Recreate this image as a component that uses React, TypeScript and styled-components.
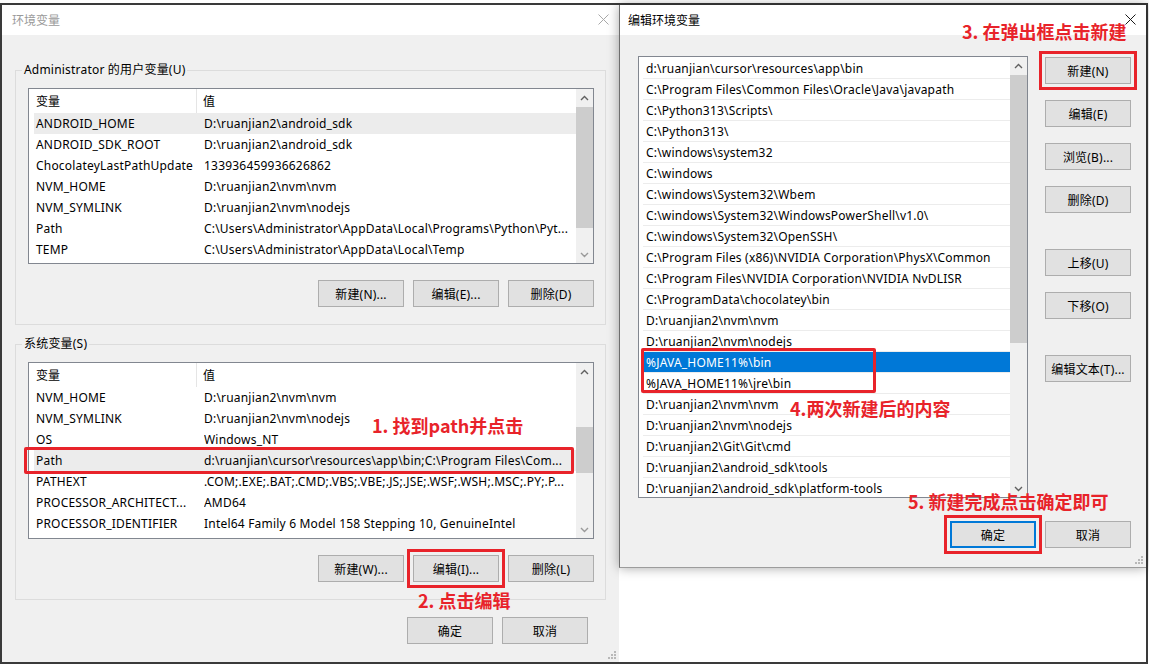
import React, { FC } from 'react';
import styled, { createGlobalStyle, css } from 'styled-components';

const GlobalStyle = createGlobalStyle`
    html, body {
        margin: 0;
        padding: 0;
        background: #fff;
    }
    body {
        font-family: "Noto Sans", "Noto Sans CJK SC", sans-serif;
        font-size: 12px;
        color: #000;
    }
    * {
        box-sizing: border-box;
    }
`;

type VarRow = { name: string; value: string; selected?: boolean };

const userVars: VarRow[] = [
    { name: 'ANDROID_HOME', value: 'D:\\ruanjian2\\android_sdk', selected: true },
    { name: 'ANDROID_SDK_ROOT', value: 'D:\\ruanjian2\\android_sdk' },
    { name: 'ChocolateyLastPathUpdate', value: '133936459936626862' },
    { name: 'NVM_HOME', value: 'D:\\ruanjian2\\nvm\\nvm' },
    { name: 'NVM_SYMLINK', value: 'D:\\ruanjian2\\nvm\\nodejs' },
    { name: 'Path', value: 'C:\\Users\\Administrator\\AppData\\Local\\Programs\\Python\\Pyt...' },
    { name: 'TEMP', value: 'C:\\Users\\Administrator\\AppData\\Local\\Temp' },
];

const systemVars: VarRow[] = [
    { name: 'NVM_HOME', value: 'D:\\ruanjian2\\nvm\\nvm' },
    { name: 'NVM_SYMLINK', value: 'D:\\ruanjian2\\nvm\\nodejs' },
    { name: 'OS', value: 'Windows_NT' },
    { name: 'Path', value: 'd:\\ruanjian\\cursor\\resources\\app\\bin;C:\\Program Files\\Com...', selected: true },
    { name: 'PATHEXT', value: '.COM;.EXE;.BAT;.CMD;.VBS;.VBE;.JS;.JSE;.WSF;.WSH;.MSC;.PY;.P...' },
    { name: 'PROCESSOR_ARCHITECT...', value: 'AMD64' },
    { name: 'PROCESSOR_IDENTIFIER', value: 'Intel64 Family 6 Model 158 Stepping 10, GenuineIntel' },
];

const pathEntries = [
    'd:\\ruanjian\\cursor\\resources\\app\\bin',
    'C:\\Program Files\\Common Files\\Oracle\\Java\\javapath',
    'C:\\Python313\\Scripts\\',
    'C:\\Python313\\',
    'C:\\windows\\system32',
    'C:\\windows',
    'C:\\windows\\System32\\Wbem',
    'C:\\windows\\System32\\WindowsPowerShell\\v1.0\\',
    'C:\\windows\\System32\\OpenSSH\\',
    'C:\\Program Files (x86)\\NVIDIA Corporation\\PhysX\\Common',
    'C:\\Program Files\\NVIDIA Corporation\\NVIDIA NvDLISR',
    'C:\\ProgramData\\chocolatey\\bin',
    'D:\\ruanjian2\\nvm\\nvm',
    'D:\\ruanjian2\\nvm\\nodejs',
    '%JAVA_HOME11%\\bin',
    '%JAVA_HOME11%\\jre\\bin',
    'D:\\ruanjian2\\nvm\\nvm',
    'D:\\ruanjian2\\nvm\\nodejs',
    'D:\\ruanjian2\\Git\\Git\\cmd',
    'D:\\ruanjian2\\android_sdk\\tools',
    'D:\\ruanjian2\\android_sdk\\platform-tools',
];

const CloseIcon: FC<{ color: string }> = ({ color }) => (
    <svg width="11" height="11" viewBox="0 0 11 11">
        <path d="M0.5 0.5 L10.5 10.5 M10.5 0.5 L0.5 10.5" stroke={color} strokeWidth="1" />
    </svg>
);

const Chevron: FC<{ up?: boolean; color?: string }> = ({ up, color = '#606060' }) => (
    <svg width="9" height="6" viewBox="0 0 9 6">
        <polyline
            points={up ? '1,5 4.5,1.5 8,5' : '1,1 4.5,4.5 8,1'}
            fill="none"
            stroke={color}
            strokeWidth="1.4"
        />
    </svg>
);

const GripIcon: FC = () => (
    <svg width="8" height="8" viewBox="0 0 8 8">
        {[
            [6, 0],
            [6, 3],
            [3, 3],
            [6, 6],
            [3, 6],
            [0, 6],
        ].map(([x, y]) => (
            <rect key={`${x}-${y}`} x={x} y={y} width="2" height="2" fill="#b8b8b8" />
        ))}
    </svg>
);

const ScrollBar: FC<{ thumbTop: number; thumbHeight: number; downColor?: string }> = ({
    thumbTop,
    thumbHeight,
    downColor,
}) => (
    <Track>
        <Arrow>
            <Chevron up />
        </Arrow>
        <Thumb $top={thumbTop} $height={thumbHeight} />
        <Arrow $bottom>
            <Chevron color={downColor} />
        </Arrow>
    </Track>
);

const VarTable: FC<{ rows: VarRow[]; height: number; thumbTop: number; thumbHeight: number }> = ({
    rows,
    height,
    thumbTop,
    thumbHeight,
}) => (
    <Table $height={height}>
        <TableContent>
            <HeaderRow>
                <HeaderCell>变量</HeaderCell>
                <HeaderCell $last>值</HeaderCell>
            </HeaderRow>
            <TableBody>
                {rows.map((row) => (
                    <VarLine key={row.name} $selected={row.selected}>
                        <NameCell>{row.name}</NameCell>
                        <ValueCell>{row.value}</ValueCell>
                    </VarLine>
                ))}
            </TableBody>
        </TableContent>
        <ScrollBar thumbTop={thumbTop} thumbHeight={thumbHeight} downColor="#9a9a9a" />
    </Table>
);

const App: FC = () => (
    <>
        <GlobalStyle />
        <Screen>
            <Frame>
                <EnvDialog>
                    <TitleBar>
                        <Title $inactive>环境变量</Title>
                        <CloseIcon color="#a8a8a8" />
                    </TitleBar>
                    <DialogBody>
                        <Group>
                            <GroupLabel>Administrator 的用户变量(U)</GroupLabel>
                            <VarTable rows={userVars} height={176} thumbTop={18} thumbHeight={121} />
                            <ButtonRow>
                                <Button>新建(N)...</Button>
                                <Button>编辑(E)...</Button>
                                <Button>删除(D)</Button>
                            </ButtonRow>
                        </Group>
                        <Group $spaced>
                            <GroupLabel>系统变量(S)</GroupLabel>
                            <VarTable rows={systemVars} height={177} thumbTop={64} thumbHeight={46} />
                            <ButtonRow>
                                <Button>新建(W)...</Button>
                                <Button $marked>编辑(I)...</Button>
                                <Button>删除(L)</Button>
                            </ButtonRow>
                        </Group>
                        <FooterRow $top={17} $inset={18}>
                            <Button>确定</Button>
                            <Button>取消</Button>
                        </FooterRow>
                    </DialogBody>
                    <Grip>
                        <GripIcon />
                    </Grip>
                </EnvDialog>

                <RightColumn>
                    <EditDialog>
                        <TitleBar>
                            <Title>编辑环境变量</Title>
                            <CloseIcon color="#1a1a1a" />
                        </TitleBar>
                        <EditBody>
                            <PathList>
                                <PathContent>
                                    {pathEntries.map((entry, i) => (
                                        <PathLine key={`${entry}-${i}`} $selected={i === 14}>
                                            {entry}
                                        </PathLine>
                                    ))}
                                </PathContent>
                                <ScrollBar thumbTop={18} thumbHeight={268} />
                            </PathList>
                            <SideButtons>
                                <Button $marked>新建(N)</Button>
                                <Button>编辑(E)</Button>
                                <Button>浏览(B)...</Button>
                                <Button>删除(D)</Button>
                                <Button $spaced>上移(U)</Button>
                                <Button>下移(O)</Button>
                                <Button $spaced>编辑文本(T)...</Button>
                            </SideButtons>
                        </EditBody>
                        <FooterRow $top={23} $inset={15}>
                            <Button $default $marked>
                                确定
                            </Button>
                            <Button>取消</Button>
                        </FooterRow>
                        <Grip>
                            <GripIcon />
                        </Grip>
                    </EditDialog>
                    <Desktop />
                </RightColumn>
            </Frame>

            <Marker style={{ left: 24, top: 447, width: 550, height: 27 }} />
            <Marker style={{ left: 641, top: 348, width: 235, height: 45 }} />
            <Note style={{ left: 372, top: 416 }}>1. 找到path并点击</Note>
            <Note style={{ left: 418, top: 591 }}>2. 点击编辑</Note>
            <Note style={{ left: 962, top: 22 }}>3. 在弹出框点击新建</Note>
            <Note style={{ left: 790, top: 399 }}>4.两次新建后的内容</Note>
            <Note style={{ left: 908, top: 492 }}>5. 新建完成点击确定即可</Note>
        </Screen>
    </>
);

const Screen = styled.div`
    position: relative;
    width: 1149px;
    height: 667px;
    padding-top: 3px;
    background: #fff;
    overflow: hidden;
`;

const Frame = styled.div`
    display: flex;
    width: 1148px;
    height: 661px;
    border: 2px solid #3a3a3a;
`;

const dialogBase = css`
    position: relative;
    display: flex;
    flex-direction: column;
    background: #f0f0f0;
`;

const EnvDialog = styled.div`
    ${dialogBase};
    width: 617px;
    flex-shrink: 0;
`;

const RightColumn = styled.div`
    flex: 1;
    display: flex;
    flex-direction: column;
    position: relative;
    z-index: 1;
`;

const EditDialog = styled.div`
    ${dialogBase};
    height: 563px;
    border-left: 1px solid #6e6e6e;
    border-bottom: 1px solid #9c9c9c;
    box-shadow: 0 0 11px rgba(0, 0, 0, 0.35);
`;

const Desktop = styled.div`
    flex: 1;
    background: #fff;
`;

const TitleBar = styled.div`
    height: 30px;
    flex-shrink: 0;
    display: flex;
    align-items: center;
    justify-content: space-between;
    padding: 0 10px 1px 8px;
    background: #fff;
`;

const Title = styled.span<{ $inactive?: boolean }>`
    font-family: "Noto Sans CJK SC", sans-serif;
    font-size: 12px;
    color: ${({ $inactive }) => ($inactive ? '#9a9a9a' : '#000')};
    padding-left: ${({ $inactive }) => ($inactive ? '2px' : '0')};
`;

const DialogBody = styled.div`
    display: flex;
    flex-direction: column;
    padding: 35px 13px 0;
`;

const Group = styled.div<{ $spaced?: boolean }>`
    display: flex;
    flex-direction: column;
    margin-top: ${({ $spaced }) => ($spaced ? '19px' : '0')};
    padding: 0 11px 17px 12px;
    border: 1px solid #dcdcdc;
`;

const GroupLabel = styled.span`
    align-self: flex-start;
    margin: -9px 0 10px -6px;
    padding: 0 2px;
    line-height: 16px;
    background: #f0f0f0;
    letter-spacing: 0.2px;
`;

const Table = styled.div<{ $height: number }>`
    display: flex;
    height: ${({ $height }) => $height}px;
    border: 1px solid #828790;
    background: #fff;
`;

const TableContent = styled.div`
    flex: 1;
    min-width: 0;
    display: flex;
    flex-direction: column;
`;

const HeaderRow = styled.div`
    display: flex;
    height: 24px;
    flex-shrink: 0;
`;

const HeaderCell = styled.div<{ $last?: boolean }>`
    display: flex;
    align-items: center;
    width: ${({ $last }) => ($last ? 'auto' : '168px')};
    flex: ${({ $last }) => ($last ? '1' : 'none')};
    padding-left: ${({ $last }) => ($last ? '6px' : '7px')};
    border-right: ${({ $last }) => ($last ? 'none' : '1px solid #e5e5e5')};
`;

const TableBody = styled.div`
    padding-left: 5px;
`;

const VarLine = styled.div<{ $selected?: boolean }>`
    display: flex;
    align-items: center;
    height: 21px;
    white-space: nowrap;
    letter-spacing: 0.2px;
    background: ${({ $selected }) => ($selected ? '#ececec' : 'transparent')};
`;

const NameCell = styled.div`
    width: 170px;
    flex-shrink: 0;
    padding-left: 2px;
    overflow: hidden;
`;

const ValueCell = styled.div`
    flex: 1;
    overflow: hidden;
`;

const Track = styled.div`
    position: relative;
    width: 17px;
    flex-shrink: 0;
    background: #f0f0f0;
`;

const Arrow = styled.div<{ $bottom?: boolean }>`
    position: absolute;
    left: 0;
    ${({ $bottom }) => ($bottom ? 'bottom: 0;' : 'top: 0;')}
    width: 17px;
    height: 17px;
    display: flex;
    align-items: center;
    justify-content: center;
`;

const Thumb = styled.div<{ $top: number; $height: number }>`
    position: absolute;
    left: 0;
    top: ${({ $top }) => $top}px;
    width: 17px;
    height: ${({ $height }) => $height}px;
    background: #cdcdcd;
`;

const ButtonRow = styled.div`
    display: flex;
    justify-content: flex-end;
    gap: 9px;
    margin-top: 16px;
`;

const FooterRow = styled.div<{ $top: number; $inset: number }>`
    display: flex;
    justify-content: flex-end;
    gap: 9px;
    margin-top: ${({ $top }) => $top}px;
    padding-right: ${({ $inset }) => $inset}px;
`;

const Button = styled.button<{ $marked?: boolean; $default?: boolean; $spaced?: boolean }>`
    width: 86px;
    height: 27px;
    flex-shrink: 0;
    padding: 0;
    font-family: "Noto Sans", "Noto Sans CJK SC", sans-serif;
    font-size: 12px;
    letter-spacing: 0.2px;
    color: #000;
    background: #e1e1e1;
    border: ${({ $default }) => ($default ? '2px solid #0078d7' : '1px solid #adadad')};
    margin-top: ${({ $spaced }) => ($spaced ? '20px' : '0')};
    ${({ $marked }) =>
        $marked &&
        css`
            outline: 3px solid #e8232a;
            outline-offset: 3px;
        `}
`;

const EditBody = styled.div`
    display: flex;
    padding: 21px 15px 0 18px;
`;

const PathList = styled.div`
    display: flex;
    width: 390px;
    height: 442px;
    border: 1px solid #828790;
    background: #fff;
    overflow: hidden;
`;

const PathContent = styled.div`
    flex: 1;
    min-width: 0;
    padding-top: 1px;
`;

const PathLine = styled.div<{ $selected?: boolean }>`
    height: 21px;
    display: flex;
    align-items: center;
    margin-left: 4px;
    padding-left: 3px;
    white-space: nowrap;
    overflow: hidden;
    letter-spacing: 0.2px;
    border-bottom: 1px solid #ececec;
    background: ${({ $selected }) => ($selected ? '#0078d7' : 'transparent')};
    color: ${({ $selected }) => ($selected ? '#fff' : '#000')};
`;

const SideButtons = styled.div`
    display: flex;
    flex-direction: column;
    gap: 16px;
    margin-left: 17px;
    padding-top: 1px;
`;

const Grip = styled.div`
    position: absolute;
    right: 3px;
    bottom: 3px;
    display: flex;
`;

const Marker = styled.div`
    position: absolute;
    z-index: 2;
    border: 3px solid #e8232a;
    border-radius: 2px;
    pointer-events: none;
`;

const Note = styled.span`
    position: absolute;
    z-index: 2;
    font-family: "Noto Sans CJK SC", sans-serif;
    font-size: 18px;
    font-weight: 700;
    line-height: 18px;
    white-space: nowrap;
    color: #e8232a;
`;

export default App;
